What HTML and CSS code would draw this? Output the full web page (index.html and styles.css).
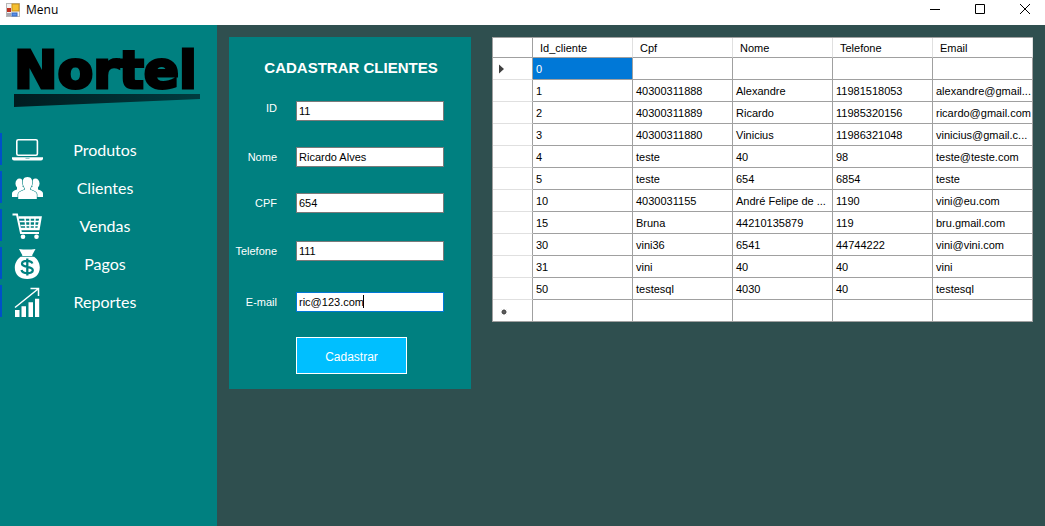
FILE: index.html
```html
<!DOCTYPE html>
<html lang="pt-BR">
<head>
<meta charset="utf-8">
<title>Menu</title>
<link rel="stylesheet" href="styles.css">
</head>
<body>
<header class="titlebar">
  <svg class="app-icon" viewBox="0 0 14 14" aria-hidden="true">
    <rect x="0.5" y="0.5" width="13" height="13" fill="#f2f2f2" stroke="#b8b8b8"/>
    <rect x="1" y="5" width="4" height="4" fill="#c03020"/>
    <rect x="6" y="1" width="7" height="7" fill="#f5c030" stroke="#c89018"/>
    <rect x="1" y="10" width="4" height="3" fill="#a8a8b0"/>
    <rect x="6" y="10" width="5" height="3" fill="#5a90e8" stroke="#3468c0"/>
  </svg>
  <span class="window-title">Menu</span>
  <div class="window-controls">
    <button type="button" aria-label="Minimizar"><svg viewBox="0 0 10 10"><path d="M0 5.5H10"/></svg></button>
    <button type="button" aria-label="Maximizar"><svg viewBox="0 0 10 10"><path d="M.5 .5H9.5V9.5H.5Z"/></svg></button>
    <button type="button" aria-label="Fechar"><svg viewBox="0 0 10 10"><path d="M0 0L10 10M10 0L0 10"/></svg></button>
  </div>
</header>
<div class="workspace">
  <aside class="sidebar">
    <div class="logo">
      <span class="logo-text">Nortel</span>
      <svg class="logo-swoosh" viewBox="0 0 186 14" aria-hidden="true">
        <defs><linearGradient id="swoosh"><stop offset="0" stop-color="#001c20"/><stop offset="1" stop-color="#003c40"/></linearGradient></defs>
        <path d="M0 0H186V5L0 13Z" fill="url(#swoosh)"/>
      </svg>
    </div>
    <nav class="menu">
      <button type="button" class="menu-item">
        <svg viewBox="0 0 32 32"><rect x="4.8" y="6.8" width="20.600" height="15.500" rx="1.500" fill="none" stroke="#fff" stroke-width="1.600"/><path d="M0 24.300H31V25.500Q31 27.500 29 27.500H2Q0 27.500 0 25.500Z" fill="#fff"/><path d="M13.500 25.300H17.500" stroke="#80c0c0"/></svg>
        <span>Produtos</span>
      </button>
      <button type="button" class="menu-item">
        <svg viewBox="0 0 32 32" fill="#fff"><ellipse cx="7.500" cy="12.500" rx="4" ry="5"/><ellipse cx="23.500" cy="12.500" rx="4" ry="5"/><path d="M0 26V22.500Q0 20 5 18.500V16H26V18.500Q31 20 31 22.500V26Z"/><path d="M15.500 6C11.500 6 10.500 9 10.800 12C11 14.500 12 16.500 13 17.500V18.500C10 20 6.200 20.500 6.200 23.500V28H24.800V23.500C24.800 20.500 21 20 18 18.500V17.500C19 16.500 20 14.500 20.200 12C20.500 9 19.500 6 15.500 6Z" stroke="#008080" stroke-width="1.200" paint-order="stroke"/></svg>
        <span>Clientes</span>
      </button>
      <button type="button" class="menu-item">
        <svg viewBox="0 0 32 32" fill="none" stroke="#fff"><path d="M.5 5.500H5L9 24H27" stroke-width="2"/><path d="M6.500 8.500H28.500L26.500 20H9" stroke-width="2.400"/><path d="M7.500 12.500H28M8.500 16.500H27.500M13 9L14 20M18 9V20M23 9L22.500 20" stroke-width="1.500"/><circle cx="11" cy="27.800" r="2.300" fill="#fff" stroke="none"/><circle cx="24.500" cy="27.800" r="2.300" fill="#fff" stroke="none"/></svg>
        <span>Vendas</span>
      </button>
      <button type="button" class="menu-item">
        <svg viewBox="0 0 32 32"><path d="M7 2Q15 3 23.500 2L20 8.500C25 11 27.800 15.500 27.800 20.500C27.800 27.500 23 32 15.300 32C7.500 32 2.800 27.500 2.800 20.500C2.800 15.500 6 11 10.500 8.500Z" fill="#fff"/><path d="M8.500 9.500H22" stroke="#008080" stroke-width=".7"/><path d="M20.300 16.500C19.500 13.500 10 12.500 10 16.800C10 21 20.800 18.800 20.800 23.300C20.800 27.500 10.500 27 9.500 23M15.300 11.500V28.500" fill="none" stroke="#008080" stroke-width="2.300"/></svg>
        <span>Pagos</span>
      </button>
      <button type="button" class="menu-item">
        <svg viewBox="0 0 32 32"><path d="M3 25H7.500V32H3ZM9.500 21.300H14V32H9.500ZM16.500 17.300H21V32H16.500ZM23 13.700H27.200V32H23Z" fill="#fff"/><path d="M3 22.500L26 4M18.500 3.500H26.500V11" fill="none" stroke="#fff" stroke-width="1.500"/></svg>
        <span>Reportes</span>
      </button>
    </nav>
  </aside>
  <main class="content">
    <form class="card">
      <h1>CADASTRAR CLIENTES</h1>
      <div class="fields">
        <label class="id-label" for="id">ID</label><input id="id" type="text" value="11">
        <label for="nome">Nome</label><input id="nome" type="text" value="Ricardo Alves">
        <label for="cpf">CPF</label><input id="cpf" type="text" value="654">
        <label for="tel">Telefone</label><input id="tel" type="text" value="111">
        <label for="email">E-mail</label><div class="active-field"><input id="email" type="text" value="ric@123.com"><span class="caret"></span></div>
        <button type="button" class="submit">Cadastrar</button>
      </div>
    </form>
    <div class="grid-wrap">
      <table class="grid">
        <thead><tr><th class="row-head"></th><th>Id_cliente</th><th>Cpf</th><th>Nome</th><th>Telefone</th><th>Email</th></tr></thead>
        <tbody>
          <tr><td class="row-head"><svg viewBox="0 0 10 10"><path d="M0 0.500L5 5L0 9.500Z"/></svg></td><td class="selected">0</td><td></td><td></td><td></td><td></td></tr>
          <tr><td class="row-head"></td><td>1</td><td>40300311888</td><td>Alexandre</td><td>11981518053</td><td>alexandre@gmail...</td></tr>
          <tr><td class="row-head"></td><td>2</td><td>40300311889</td><td>Ricardo</td><td>11985320156</td><td>ricardo@gmail.com</td></tr>
          <tr><td class="row-head"></td><td>3</td><td>40300311880</td><td>Vinicius</td><td>11986321048</td><td>vinicius@gmail.c...</td></tr>
          <tr><td class="row-head"></td><td>4</td><td>teste</td><td>40</td><td>98</td><td>teste@teste.com</td></tr>
          <tr><td class="row-head"></td><td>5</td><td>teste</td><td>654</td><td>6854</td><td>teste</td></tr>
          <tr><td class="row-head"></td><td>10</td><td>4030031155</td><td>André Felipe de ...</td><td>1190</td><td>vini@eu.com</td></tr>
          <tr><td class="row-head"></td><td>15</td><td>Bruna</td><td>44210135879</td><td>119</td><td>bru.gmail.com</td></tr>
          <tr><td class="row-head"></td><td>30</td><td>vini36</td><td>6541</td><td>44744222</td><td>vini@vini.com</td></tr>
          <tr><td class="row-head"></td><td>31</td><td>vini</td><td>40</td><td>40</td><td>vini</td></tr>
          <tr><td class="row-head"></td><td>50</td><td>testesql</td><td>4030</td><td>40</td><td>testesql</td></tr>
          <tr><td class="row-head"><svg viewBox="0 0 10 10"><circle cx="5" cy="6" r="2.200"/><path d="M5 3V9M2 6H8M2.900 3.900L7.100 8.100M7.100 3.900L2.900 8.100" stroke="#606060" stroke-width=".8"/></svg></td><td></td><td></td><td></td><td></td><td></td></tr>
        </tbody>
      </table>
    </div>
  </main>
</div>
</body>
</html>
```
FILE: styles.css
```css
* { box-sizing: border-box; }

body {
  margin: 0;
  min-height: 100vh;
  display: flex;
  flex-direction: column;
  background: #2f4f4f;
  font-family: "Liberation Sans", Arial, sans-serif;
  font-size: 11px;
  color: #000;
}

button, input { font: inherit; }

.titlebar {
  display: flex;
  align-items: center;
  height: 25px;
  padding: 0 0 6px 6px;
  background: #fff;
}
.app-icon { width: 14px; height: 14px; }
.window-title {
  margin-left: 6px;
  font-family: "Open Sans", sans-serif;
  font-size: 12px;
  line-height: 18px;
}
.window-controls { display: flex; align-self: flex-start; margin-left: auto; }
.window-controls button {
  display: flex;
  align-items: center;
  justify-content: center;
  width: 45px;
  height: 18px;
  padding: 0 0 0 5px;
  border: 0;
  background: none;
}
.window-controls svg {
  width: 10px;
  height: 10px;
  fill: none;
  stroke: #000;
  overflow: visible;
}

.workspace { flex: 1; display: flex; }

.sidebar { width: 217px; flex: none; background: #008080; }
.logo { height: 108px; padding: 16px 0 0 14px; }
.logo-text {
  display: block;
  height: 53px;
  font-family: "DejaVu Sans", sans-serif;
  font-size: 52px;
  font-weight: 700;
  line-height: 58px;
  -webkit-text-stroke: 3px #000;
}
.logo-swoosh { display: block; width: 186px; height: 14px; }

.menu { display: flex; flex-direction: column; gap: 6px; }
.menu-item {
  display: flex;
  align-items: center;
  height: 32px;
  padding: 0 0 0 10px;
  border: 0;
  border-left: 2px solid #0050c8;
  background: none;
  color: #fff;
  font-family: Lato, sans-serif;
  font-size: 16px;
}
.menu-item svg { width: 32px; height: 32px; }
.menu-item span { width: 122px; text-align: center; }

.content {
  flex: 1;
  min-width: 0;
  display: flex;
  align-items: flex-start;
  gap: 21px;
  padding: 12px;
}

.card {
  flex: none;
  width: 242px;
  padding: 22px 0 15px;
  background: #008080;
  color: #fff;
}
.card h1 {
  margin: 0 0 24px;
  padding-left: 2px;
  font-size: 15px;
  line-height: 18px;
  text-align: center;
}
.fields {
  display: grid;
  grid-template-columns: 48px 148px;
  grid-template-rows: 46px 46px 48px 51px 45px 37px;
  column-gap: 19px;
  align-items: start;
}
.fields label { line-height: 20px; text-align: right; }
.fields .id-label { line-height: 14px; }
.fields input {
  display: block;
  width: 100%;
  height: 20px;
  padding: 0 2px;
  border: 1px solid #7a7a7a;
  background: #fff;
  color: #000;
}
.active-field { position: relative; }
.fields .active-field input { border-color: #0078d7; }
.caret {
  position: absolute;
  top: 3px;
  left: 67px;
  width: 1px;
  height: 13px;
  background: #000;
}
.submit {
  grid-column: 2;
  width: 111px;
  height: 37px;
  padding: 2px 0 0;
  border: 1px solid #fff;
  background: #00bfff;
  color: #fff;
  font-size: 12px;
}

.grid-wrap { flex: 1; min-width: 0; border: 1px solid #a0a0a0; border-width: 1px 0 0 1px; }
.grid {
  width: 100%;
  table-layout: fixed;
  border-collapse: separate;
  border-spacing: 0;
  background: #fff;
}
.grid th, .grid td {
  height: 22px;
  padding: 0 0 0 3px;
  border-right: 1px solid #a0a0a0;
  border-bottom: 1px solid #a0a0a0;
  font-weight: 400;
  text-align: left;
  white-space: nowrap;
  overflow: hidden;
  text-overflow: ellipsis;
}
.grid th { height: 20px; padding: 0 7px; border-right-color: #e0e0e0; }
.grid .row-head { width: 40px; padding: 0 6px; border-bottom-color: #e0e0e0; border-right-color: #a0a0a0; }
.grid th.row-head, .grid tr:last-child .row-head { border-bottom-color: #a0a0a0; }
.grid .row-head svg { display: block; width: 10px; height: 10px; fill: #404040; }
.grid .selected { background: #0078d7; color: #fff; }
```
